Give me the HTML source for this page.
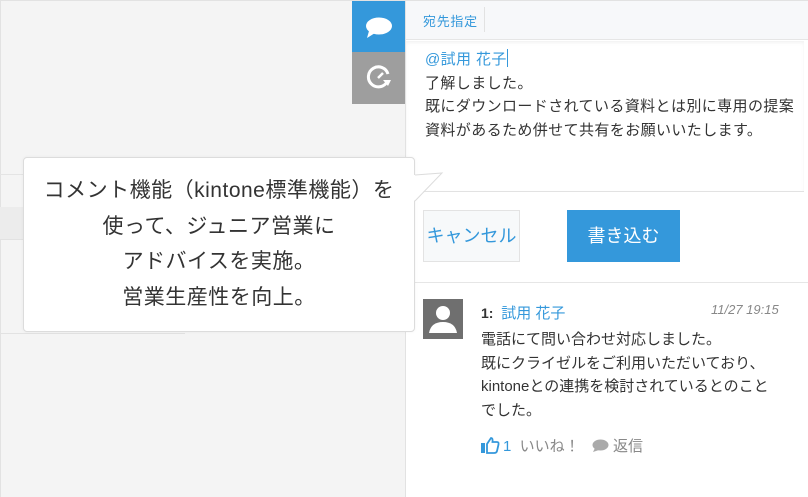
<!DOCTYPE html>
<html><head><meta charset="utf-8"><style>
*{margin:0;padding:0;box-sizing:border-box}
body{width:808px;height:497px;overflow:hidden;background:#f4f4f4;font-family:"Liberation Sans","Noto Sans CJK JP",sans-serif;position:relative;color:#333}
.abs{position:absolute}
</style></head><body>
<div class="abs" style="left:0;top:0;width:808px;height:1px;background:#e2e2e2"></div>
<div class="abs" style="left:0;top:0;width:1px;height:497px;background:#e2e2e2"></div>
<div class="abs" style="left:0;top:174px;width:405px;height:1px;background:#e4e4e4"></div>
<div class="abs" style="left:0;top:207px;width:405px;height:33px;background:#ececec;border-bottom:1px solid #e2e2e2"></div>
<div class="abs" style="left:0;top:333px;width:185px;height:1px;background:#e2e2e2"></div>
<!-- tabs -->
<div class="abs" style="left:352px;top:1px;width:53px;height:51px;background:#3498db"></div>
<svg class="abs" style="left:352px;top:1px" width="53" height="51" viewBox="0 0 53 51"><ellipse cx="27" cy="25" rx="13" ry="8.5" fill="#fff"/><path d="M17 30 L15 37 L23 32Z" fill="#fff"/></svg>
<div class="abs" style="left:352px;top:52px;width:53px;height:52px;background:#9e9e9e"></div>
<svg class="abs" style="left:352px;top:52px" width="53" height="52" viewBox="0 0 53 52"><path d="M35 30 A10 10 0 1 1 36 22" fill="none" stroke="#fff" stroke-width="3"/><path d="M31 28 L39 28 L36 34Z" fill="#fff"/><path d="M26 26 L31 21" stroke="#fff" stroke-width="2.5"/></svg>
<!-- panel -->
<div class="abs" style="left:405px;top:1px;width:403px;height:496px;background:#fff;border-left:1px solid #e2e2e2"></div>
<div class="abs" style="left:406px;top:1px;width:402px;height:39px;background:#f7f8fa;border-bottom:1px solid #e6e6e6"></div>
<div class="abs" style="left:423px;top:11px;font-size:13px;letter-spacing:0.7px;color:#3498db">宛先指定</div>
<div class="abs" style="left:484px;top:7px;width:1px;height:25px;background:#e2e2e2"></div>
<div class="abs" style="left:406px;top:41px;width:398px;height:151px;border-bottom:1px solid #e2e2e2;box-shadow:inset 0 2px 3px rgba(0,0,0,.05)"></div>
<div class="abs" style="left:425px;top:48px;font-size:15px;letter-spacing:0.4px;line-height:23.5px;color:#333;white-space:nowrap">
<span style="color:#3498db">@試用 花子</span><span style="display:inline-block;width:1px;height:18px;background:#3498db;vertical-align:-3px"></span><br>了解しました。<br>既にダウンロードされている資料とは別に専用の提案<br>資料があるため併せて共有をお願いいたします。</div>
<div class="abs" style="left:423px;top:210px;width:97px;height:52px;background:#f7f9fa;border:1px solid #e3e3e3;font-size:18px;color:#3498db;text-align:center;line-height:50px;white-space:nowrap">キャンセル</div>
<div class="abs" style="left:567px;top:210px;width:113px;height:52px;background:#3498db;font-size:18px;color:#fff;text-align:center;line-height:52px">書き込む</div>
<div class="abs" style="left:406px;top:282px;width:402px;height:1px;background:#e6e6e6"></div>
<!-- comment -->
<div class="abs" style="left:423px;top:299px;width:40px;height:40px;background:#6f6f6f"></div>
<svg class="abs" style="left:423px;top:299px" width="40" height="40" viewBox="0 0 40 40"><circle cx="20" cy="14" r="7" fill="#fff"/><path d="M6 34 Q8 23 20 23 Q32 23 34 34Z" fill="#fff"/></svg>
<div class="abs" style="left:481px;top:302px;font-size:14px;color:#333;white-space:nowrap"><b style="font-weight:bold">1:</b>&nbsp; <span style="color:#3498db;font-size:15px">試用 花子</span></div>
<div class="abs" style="left:711px;top:302px;font-size:13px;color:#888;font-style:italic">11/27 19:15</div>
<div class="abs" style="left:481px;top:328px;font-size:15px;line-height:23.5px;color:#333;white-space:nowrap">電話にて問い合わせ対応しました。<br>既にクライゼルをご利用いただいており、<br>kintoneとの連携を検討されているとのこと<br>でした。</div>
<svg class="abs" style="left:480px;top:436px" width="20" height="18" viewBox="0 0 20 18"><rect x="1" y="7" width="4" height="10" fill="#3498db"/><path d="M7 8 L11 2 Q13 2 12.5 6 L17 6 Q19 6 18.5 8.5 L17 15 Q16.5 17 14 17 L7 17Z" fill="none" stroke="#3498db" stroke-width="1.8"/></svg>
<div class="abs" style="left:503px;top:435px;font-size:15px;color:#888;white-space:nowrap"><span style="color:#3498db">1</span>&nbsp; いいね！</div>
<svg class="abs" style="left:592px;top:439px" width="17" height="13" viewBox="0 0 17 13"><ellipse cx="8.5" cy="6" rx="8" ry="5.5" fill="#aaa"/><path d="M3 9 L1 13 L7 11Z" fill="#aaa"/></svg>
<div class="abs" style="left:613px;top:435px;font-size:15px;color:#888">返信</div>
<!-- bubble -->
<div class="abs" style="left:23px;top:157px;width:392px;height:175px;background:#fff;border:1px solid #dcdcdc;border-radius:4px;box-shadow:0 0 3px rgba(0,0,0,.05)"></div>
<svg class="abs" style="left:412px;top:168px" width="35" height="40" viewBox="0 0 35 40"><path d="M2 7 L30 5 L2 33Z" fill="#fff"/><path d="M3 7 L30 5 L3 33" fill="none" stroke="#dcdcdc" stroke-width="1"/></svg>
<div class="abs" style="left:23px;top:173px;width:392px;text-align:center;font-size:21px;letter-spacing:0.5px;line-height:35.5px;color:#333;white-space:nowrap">コメント機能（kintone標準機能）を<br>使って、ジュニア営業に<br>アドバイスを実施。<br>営業生産性を向上。</div>
</body></html>
